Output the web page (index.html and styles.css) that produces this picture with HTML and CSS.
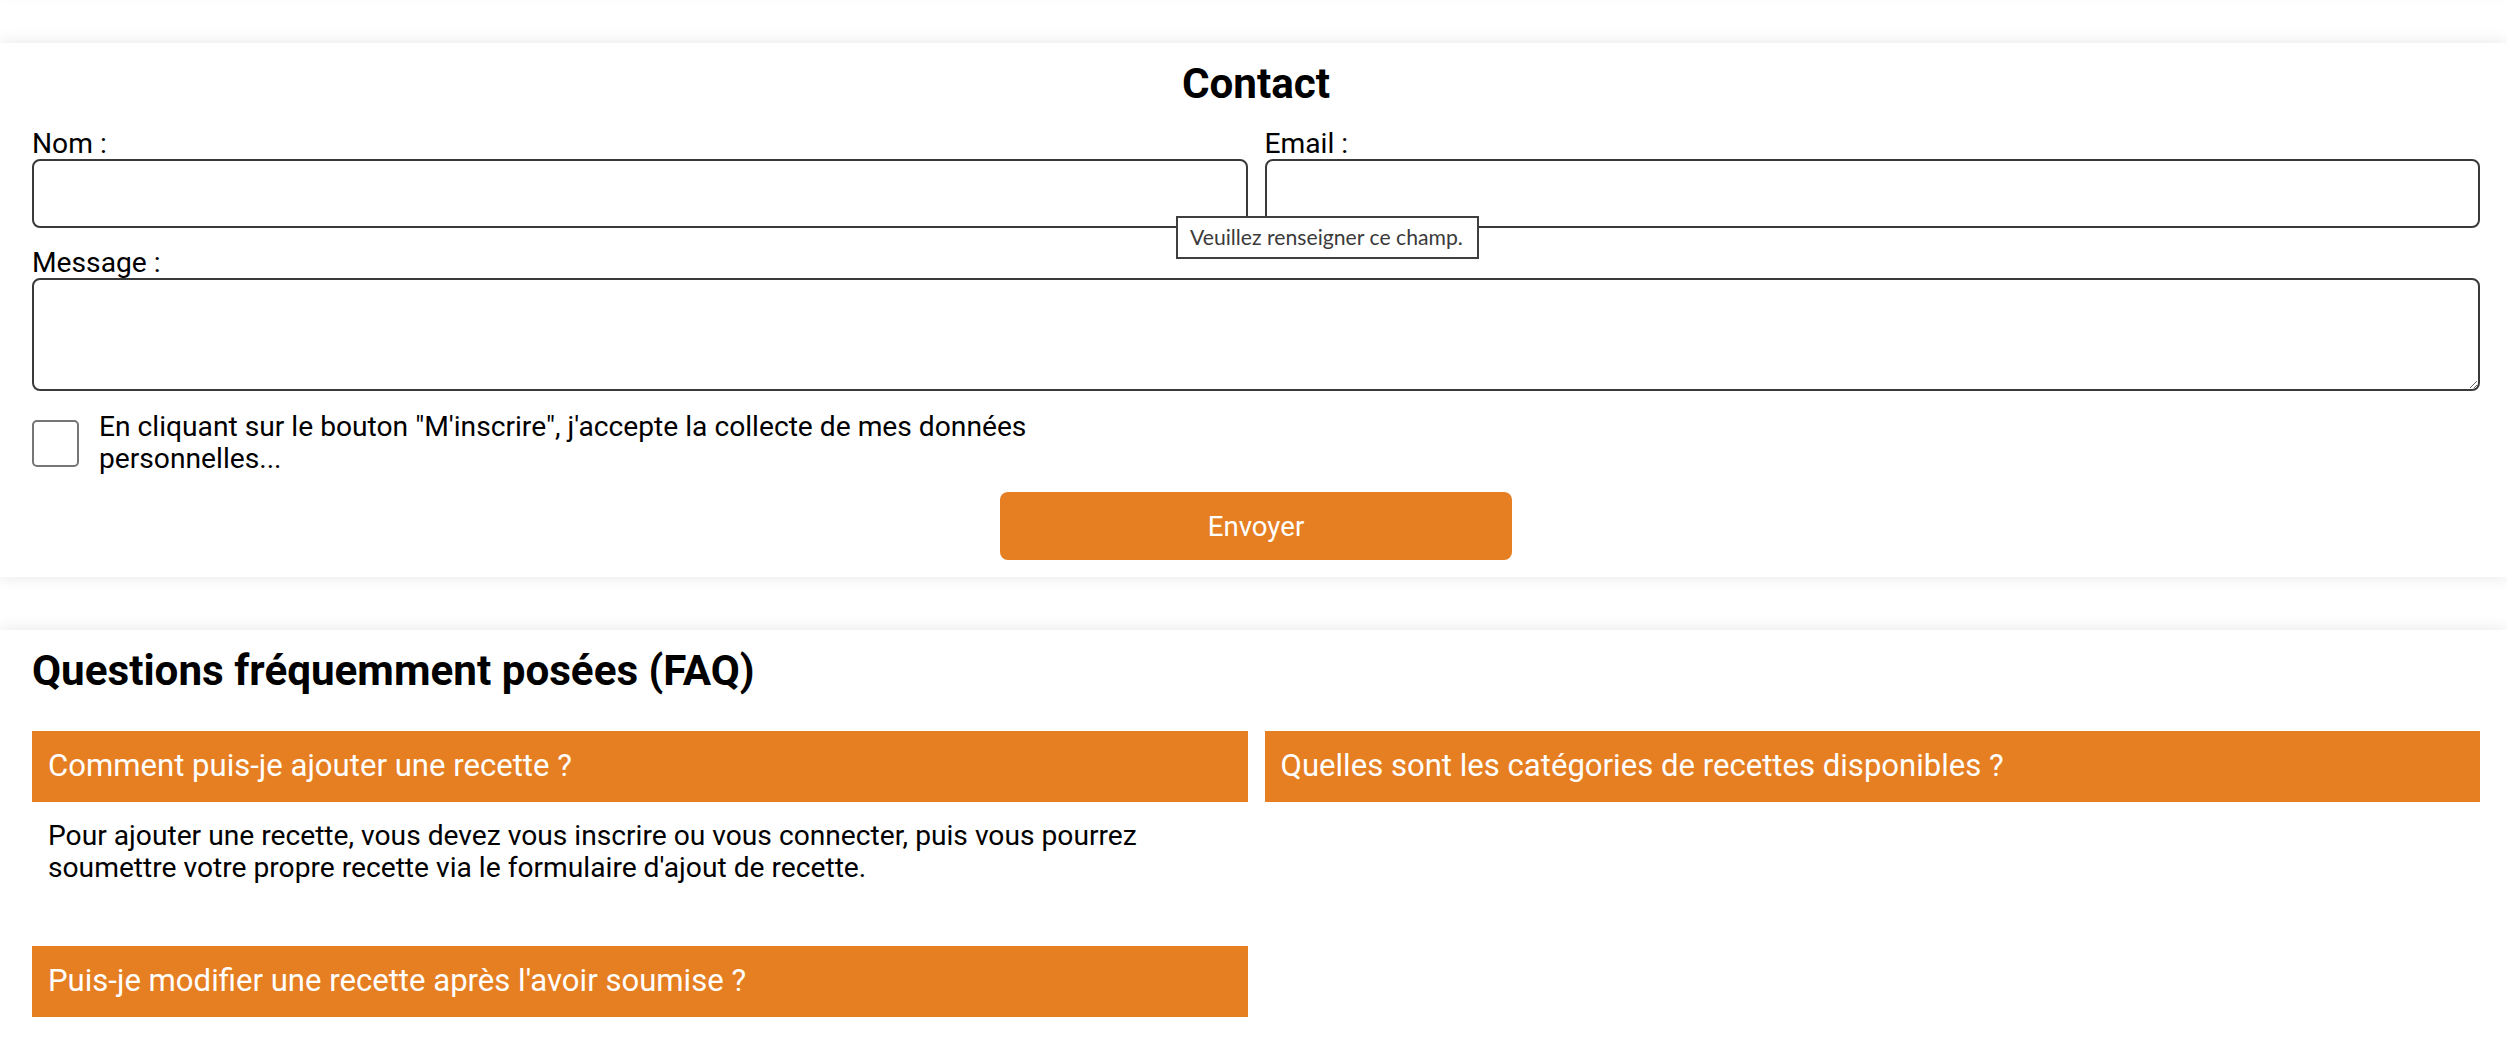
FILE: index.html
```html
<!DOCTYPE html>
<html lang="fr">
<head>
<meta charset="utf-8">
<title>Contact</title>
<link rel="stylesheet" href="styles.css">
</head>
<body>
<div class="section ghost"></div>
<section class="section contact">
  <h2 class="title title-center">Contact</h2>
  <form class="form">
    <div class="row-2">
      <div class="field">
        <label class="label" for="nom">Nom :</label>
        <input class="input" id="nom" type="text">
      </div>
      <div class="field">
        <label class="label" for="email">Email :</label>
        <input class="input" id="email" type="email">
      </div>
    </div>
    <div class="field">
      <label class="label" for="message">Message :</label>
      <textarea class="input textarea" id="message"></textarea>
    </div>
    <div class="check-row">
      <input class="checkbox" type="checkbox" id="rgpd">
      <label class="check-text" for="rgpd">En cliquant sur le bouton "M'inscrire", j'accepte la collecte de mes données personnelles...</label>
    </div>
    <div class="actions">
      <button class="btn" type="button">Envoyer</button>
    </div>
  </form>
  <div class="tooltip">Veuillez renseigner ce champ.</div>
</section>
<section class="section faq">
  <h2 class="title">Questions fréquemment posées (FAQ)</h2>
  <div class="faq-grid">
    <div class="faq-item">
      <h3 class="faq-q">Comment puis-je ajouter une recette ?</h3>
      <p class="faq-a">Pour ajouter une recette, vous devez vous inscrire ou vous connecter, puis vous pourrez soumettre votre propre recette via le formulaire d'ajout de recette.</p>
    </div>
    <div class="faq-item">
      <h3 class="faq-q">Quelles sont les catégories de recettes disponibles ?</h3>
    </div>
    <div class="faq-item">
      <h3 class="faq-q">Puis-je modifier une recette après l'avoir soumise ?</h3>
    </div>
  </div>
</section>
</body>
</html>
```
FILE: styles.css
```css
* { box-sizing: border-box; }

html, body {
  margin: 0;
  padding: 0;
  background: #ffffff;
}

body {
  font-family: Roboto, "Liberation Sans", Arial, sans-serif;
  font-size: 28.2px;
  line-height: 32px;
  color: #000;
  overflow: hidden;
}

.section {
  background: #fff;
  box-shadow: 0 0 16px rgba(0, 0, 0, 0.1);
  margin-bottom: 53px;
  padding: 17px 27px 17px 32px;
}

.ghost {
  height: 100px;
  margin-top: -110px;
  padding: 0;
}

.contact {
  position: relative;
}

.title {
  margin: 0;
  font-size: 42.2px;
  line-height: 48px;
  font-weight: 700;
}

.title-center {
  text-align: center;
}

.form {
  margin-top: 21px;
}

.row-2 {
  display: grid;
  grid-template-columns: 1fr 1fr;
  column-gap: 17px;
}

.field {
  margin-bottom: 20px;
}

.label {
  display: block;
  font-size: 28.2px;
  line-height: 30px;
}

.input {
  display: block;
  width: 100%;
  height: 69px;
  border: 2px solid #3a3a3a;
  border-radius: 8px;
  background: #fff;
  font: inherit;
  padding: 8px 12px;
  margin: 0;
}

.textarea {
  height: 113px;
  resize: vertical;
}

.check-row {
  display: flex;
  align-items: center;
}

.checkbox {
  appearance: none;
  -webkit-appearance: none;
  width: 47px;
  height: 47px;
  margin: 0 20px 0 0;
  border: 2px solid #767676;
  border-radius: 5px;
  background: #fff;
  flex: none;
}

.check-text {
  max-width: 1000px;
  font-size: 28.2px;
  line-height: 32px;
}

.actions {
  display: flex;
  justify-content: center;
  margin-top: 17px;
}

.btn {
  width: 512px;
  height: 68px;
  border: none;
  border-radius: 8px;
  background: #e67e22;
  color: #fff;
  font-family: Roboto, "Liberation Sans", Arial, sans-serif;
  font-size: 27.6px;
  padding: 0;
}

.tooltip {
  position: absolute;
  left: 1176px;
  top: 173px;
  width: 303px;
  height: 43px;
  border: 2px solid #3f3f3f;
  background: #fff;
  color: #3b3b3b;
  font-family: Lato, "Noto Sans", sans-serif;
  font-size: 21.2px;
  line-height: 39px;
  padding: 0 12px;
  white-space: nowrap;
}

.faq {
  padding-bottom: 90px;
}

.faq .title {
  margin-bottom: 36px;
}

.faq-grid {
  display: grid;
  grid-template-columns: 1fr 1fr;
  column-gap: 17px;
  row-gap: 44px;
  align-items: start;
}

.faq-q {
  margin: 0;
  background: #e67e22;
  color: #fff;
  font-size: 31.1px;
  font-weight: 400;
  line-height: 35px;
  padding: 17px 16px 19px;
}

.faq-a {
  margin: 0;
  padding: 18px 16px;
  font-size: 28.2px;
  line-height: 32px;
}
```
